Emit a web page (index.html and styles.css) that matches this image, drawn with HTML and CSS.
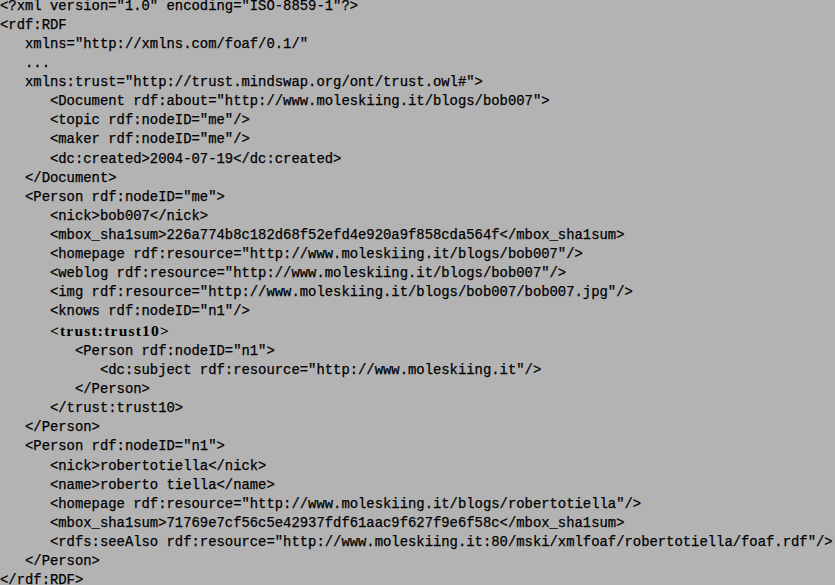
FILE: index.html
```html
<!DOCTYPE html>
<html>
<head>
<meta charset="utf-8">
<link rel="stylesheet" href="styles.css">
</head>
<body>
<pre class="listing">&lt;?xml version="1.0" encoding="ISO-8859-1"?&gt;
&lt;rdf:RDF
   xmlns="http://xmlns.com/foaf/0.1/"
   ...
   xmlns:trust="http://trust.mindswap.org/ont/trust.owl#"&gt;
      &lt;Document rdf:about="http://www.moleskiing.it/blogs/bob007"&gt;
      &lt;topic rdf:nodeID="me"/&gt;
      &lt;maker rdf:nodeID="me"/&gt;
      &lt;dc:created&gt;2004-07-19&lt;/dc:created&gt;
   &lt;/Document&gt;
   &lt;Person rdf:nodeID="me"&gt;
      &lt;nick&gt;bob007&lt;/nick&gt;
      &lt;mbox_sha1sum&gt;226a774b8c182d68f52efd4e920a9f858cda564f&lt;/mbox_sha1sum&gt;
      &lt;homepage rdf:resource="http://www.moleskiing.it/blogs/bob007"/&gt;
      &lt;weblog rdf:resource="http://www.moleskiing.it/blogs/bob007"/&gt;
      &lt;img rdf:resource="http://www.moleskiing.it/blogs/bob007/bob007.jpg"/&gt;
      &lt;knows rdf:nodeID="n1"/&gt;
      <span class="bold">&lt;trust:trust10&gt;</span>
         &lt;Person rdf:nodeID="n1"&gt;
            &lt;dc:subject rdf:resource="http://www.moleskiing.it"/&gt;
         &lt;/Person&gt;
      &lt;/trust:trust10&gt;
   &lt;/Person&gt;
   &lt;Person rdf:nodeID="n1"&gt;
      &lt;nick&gt;robertotiella&lt;/nick&gt;
      &lt;name&gt;roberto tiella&lt;/name&gt;
      &lt;homepage rdf:resource="http://www.moleskiing.it/blogs/robertotiella"/&gt;
      &lt;mbox_sha1sum&gt;71769e7cf56c5e42937fdf61aac9f627f9e6f58c&lt;/mbox_sha1sum&gt;
      &lt;rdfs:seeAlso rdf:resource="http://www.moleskiing.it:80/mski/xmlfoaf/robertotiella/foaf.rdf"/&gt;
   &lt;/Person&gt;
&lt;/rdf:RDF&gt;</pre>
</body>
</html>
```
FILE: styles.css
```css
html, body {
  margin: 0;
  padding: 0;
  background: #b3b3b3;
  overflow: hidden;
}
.listing {
  margin: -3px 0 0 0;
  padding: 0;
  font-family: "Liberation Mono", "Courier New", monospace;
  font-size: 13.88px;
  line-height: 19.07px;
  color: #000;
  -webkit-text-stroke: 0.25px #000;
  white-space: pre;
}
.bold {
  font-family: "Liberation Serif", "Times New Roman", serif;
  font-weight: bold;
  font-size: 15.5px;
  letter-spacing: 1.2px;
  -webkit-text-stroke: 0;
}
```
